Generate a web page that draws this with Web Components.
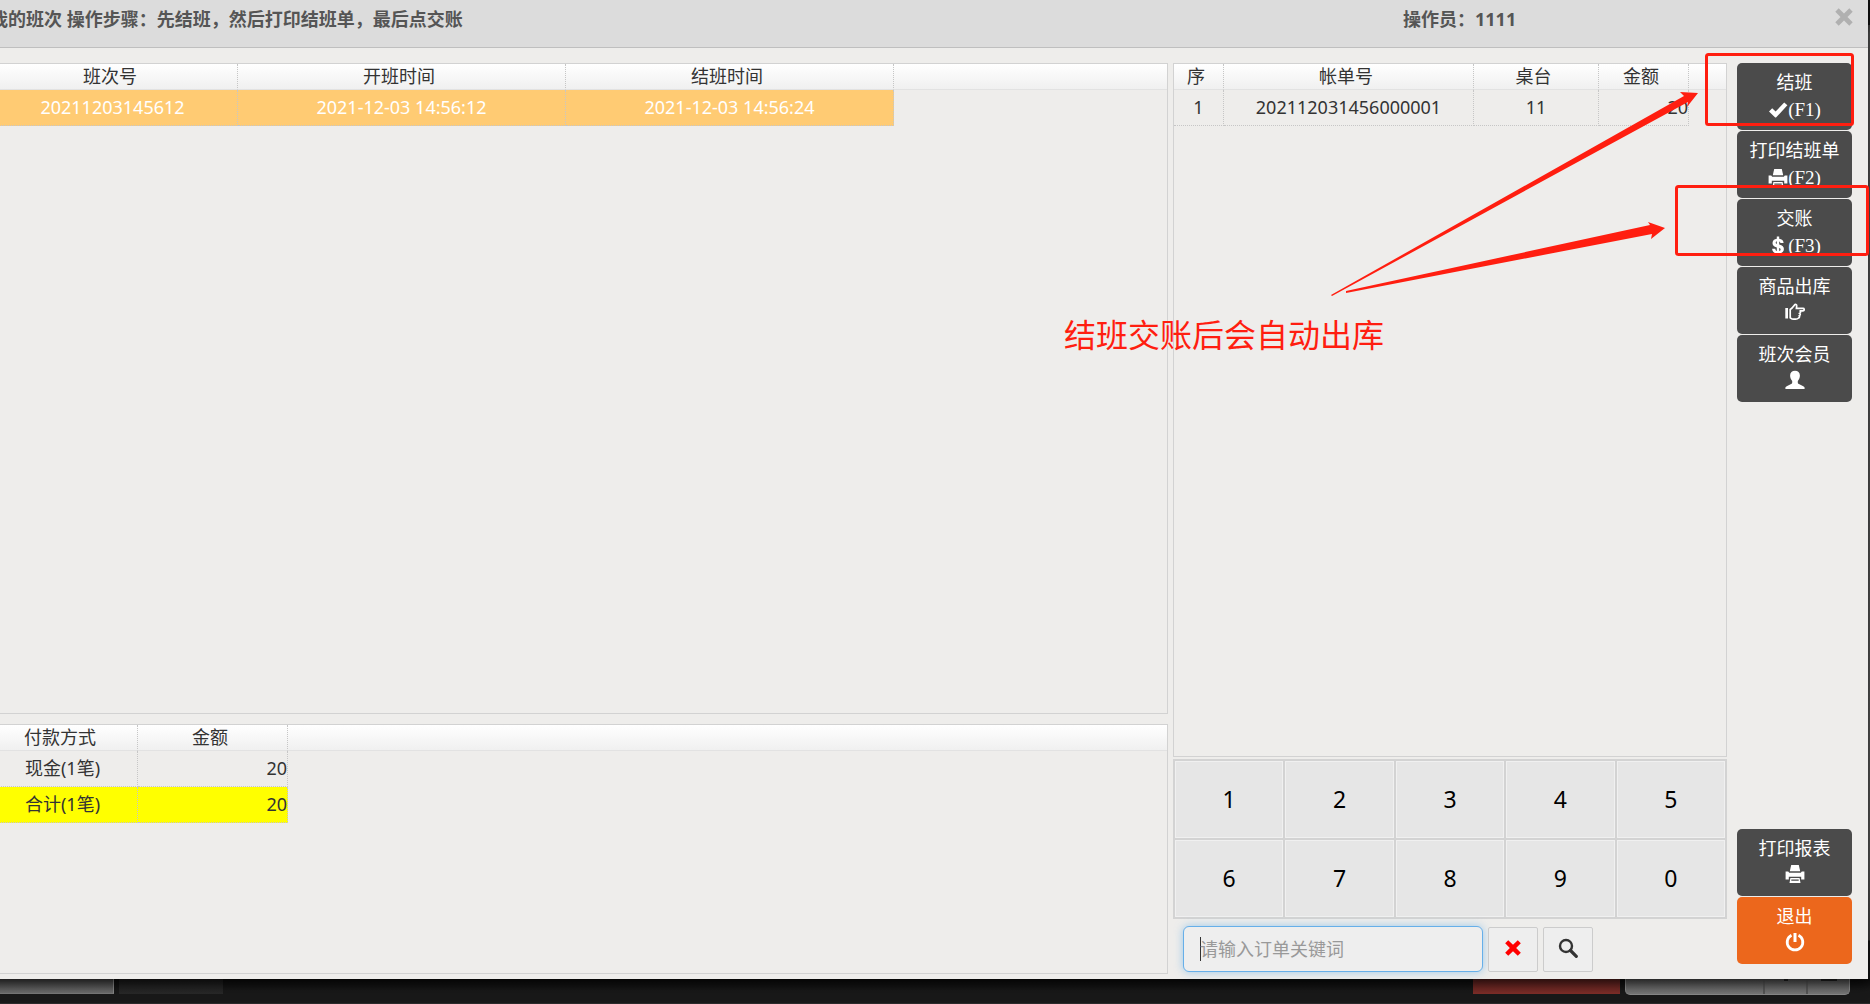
<!DOCTYPE html>
<html lang="zh-CN">
<head>
<meta charset="utf-8">
<title>我的班次</title>
<style>
html,body{margin:0;height:100%}
body{overflow:hidden;background:#191919;font-family:"Noto Sans","Noto Sans CJK SC",sans-serif;font-size:18px;line-height:24px;color:#333}
</style>
</head>
<body>
<shift-page></shift-page>
<script>
const ICONS = {
  check:'<path d="M1 11.5 4.2 8.3 7.6 11.6 16.2 2.4 19.4 5.2 8 17.6 7.2 17.6Z"/>',
  print:'<path d="M6.2 1h7.6l1.4 6.2H4.800z"/><path d="M.6 7.600h2.600l1 1.200h11.600l1-1.200h2.600V15.500h-3.200v-2.800H3.800v2.800H.6z"/><path d="M5.400 14h9.200l.9 5H4.500z M6.300 15.400v1.300h7.400v-1.300z" fill-rule="evenodd"/>',
  usd:'<path d="M8.800 .5h2.400v2.300c2.700.3 4.200 1.700 4.400 4.200h-3.200c-.1-.9-.5-1.400-1.200-1.600v3.100c3.300.8 4.700 2.100 4.700 4.600 0 2.600-1.700 4.100-4.700 4.400V19.500H8.800v-2c-2.900-.3-4.600-1.900-4.700-4.700h3.200c.1 1.200.6 1.900 1.500 2.200v-3.500C5.800 10.700 4.500 9.400 4.500 7.100c0-2.400 1.700-4 4.300-4.300z M8.800 5.300c-.7.2-1.100.7-1.100 1.400s.4 1.100 1.100 1.400z M11.200 12v3.100c.9-.2 1.400-.7 1.400-1.500s-.5-1.300-1.400-1.600z" fill-rule="evenodd"/>',
  hand:'<path d="M.3 6h2.700v10.500H.3z"/><path d="M5.200 7.500C7 6.500 8.300 4.600 9.500 3c.8-1 2.300-.4 2.200.9L11.400 6.400H18c1.600 0 1.600 2.400 0 2.400h-3.400c1.300.6 1.100 2.200.1 2.600.9.700.6 2-.4 2.400.5.8.2 1.800-.7 2.200-.9.900-1.800 1.200-3 1.200H8.500c-1.300 0-2-.5-3.300-1.400z" fill="none" stroke="currentColor" stroke-width="1.700"/>',
  user:'<path d="M10 .8c2.900 0 4.900 1.900 4.900 4.800 0 2-.8 4-2.100 5.300v1.700c0 .8.300 1.100 1.100 1.500l4.400 2.200c1 .5 1.300 1 1.300 2V19H.4v-.7c0-1 .3-1.500 1.300-2l4.400-2.200c.8-.4 1.100-.7 1.100-1.500v-1.700C5.900 9.600 5.100 7.600 5.100 5.600 5.100 2.700 7.100.8 10 .8z"/>',
  off:'<path d="M8.500 1h3v9h-3z"/><path d="M6.500 3.200a7.800 7.800 0 1 0 7 0" fill="none" stroke="currentColor" stroke-width="2.800"/>',
  remove:'<path d="M4.700 1.300 10 6.500l5.300-5.200 3.400 3.400L13.500 10l5.200 5.300-3.400 3.400L10 13.500l-5.300 5.200-3.400-3.400L6.500 10 1.300 4.700z"/>',
  search:'<circle cx="8" cy="8" r="6" fill="none" stroke="currentColor" stroke-width="2.400"/><path d="M12.500 12.500 18.300 18.300" stroke="currentColor" stroke-width="3.200" stroke-linecap="round"/>'
};
class Base extends HTMLElement{
  connectedCallback(){
    if(this.shadowRoot) return;
    this.attachShadow({mode:'open'}).innerHTML='<style>*{box-sizing:border-box}:host{box-sizing:border-box}'+this.css()+'</style>'+this.html();
  }
}
customElements.define('glyph-icon', class extends Base{
  css(){return ':host{display:inline-block;width:20px;height:20px}svg{display:block;width:100%;height:100%;fill:currentColor}'}
  html(){return `<svg viewBox="0 0 20 20" aria-hidden="true">${ICONS[this.getAttribute('name')]}</svg>`}
});
customElements.define('data-grid', class extends Base{
  css(){return `
    :host{display:block;border:1px solid #d2d2d2;overflow:hidden}
    table{width:100%;table-layout:fixed;border-collapse:separate;border-spacing:0}
    th,td{padding:0 0 2px;line-height:22px;text-align:center;font-weight:400;white-space:nowrap;border-right:1px dotted #c6c6c6}
    th{height:26px;padding-right:5px;border-bottom:1px solid #e2e2e2;background:linear-gradient(#fff,#f0f0f0)}
    td{height:36px;border-bottom:1px dotted #c6c6c6}
    th:last-child,td:last-child{border-right:0}
    td:last-child{border-bottom:0}
    td.num{text-align:right}
    tr.selected td:not(:last-child){background:#ffcb73;color:#fff}
    tr.total td:not(:last-child){background:#ff0}`}
  html(){
    const cols=JSON.parse(this.getAttribute('columns')), rows=JSON.parse(this.getAttribute('rows'));
    return `<table><colgroup>${cols.map(c=>`<col style="width:${c[1]}px">`).join('')}<col></colgroup>
    <thead><tr>${cols.map(c=>`<th scope="col">${c[0]}</th>`).join('')}<th></th></tr></thead>
    <tbody>${rows.map(r=>`<tr class="${r.state||''}">${r.cells.map((v,i)=>`<td class="${cols[i][2]||''}">${v}</td>`).join('')}<td></td></tr>`).join('')}</tbody></table>`}
});
customElements.define('key-pad', class extends Base{
  css(){return `
    :host{display:grid;grid-template-columns:repeat(5,1fr);gap:2px;padding:2px;background:#d3d3d3}
    button{height:77px;border:1px solid #f0f0f0;background:#e6e6e6;font:23px/30px "Noto Sans",sans-serif;color:#000;padding:0 0 2px}`}
  html(){return [1,2,3,4,5,6,7,8,9,0].map(n=>`<button type="button">${n}</button>`).join('')}
});
customElements.define('order-search', class extends Base{
  css(){return `
    :host{display:flex;align-items:flex-end;gap:5px;padding-left:10px}
    input{width:300px;height:46px;border:1px solid #66afe9;border-radius:6px;padding:0 16px;font:inherit;color:#333;outline:0;
      background:linear-gradient(#333,#333) 16px 50%/1px 24px no-repeat #eee;box-shadow:0 0 8px rgba(102,175,233,.6)}
    input::placeholder{color:#999;opacity:1}
    button{width:50px;height:45px;border:1px solid #ccc;border-radius:2px;background:#eee;color:#333;padding:0 0 3px;display:flex;align-items:center;justify-content:center}
    .clear{color:#f00}.clear glyph-icon{width:18px;height:18px}`}
  html(){return `<input type="text" aria-label="订单关键词" placeholder="请输入订单关键词">
    <button type="button" class="clear" aria-label="清除"><glyph-icon name="remove"></glyph-icon></button>
    <button type="button" aria-label="搜索"><glyph-icon name="search"></glyph-icon></button>`}
});
customElements.define('action-button', class extends Base{
  css(){return `
    :host{display:block}
    button{width:100%;height:67px;border:0;border-radius:5px;background:var(--fill,#4b4b4b);color:#fff;font:inherit;padding:7px 0 0;display:flex;flex-direction:column;align-items:center;justify-content:flex-start}
    .key{display:flex;align-items:center;height:32px;font:19px/32px "Liberation Serif",serif}
    .key.plain{height:27px}`}
  html(){const k=this.getAttribute('key');
    return `<button type="button"><span><slot></slot></span><span class="key ${k?'':'plain'}"><glyph-icon name="${this.getAttribute('icon')}"></glyph-icon>${k?`<span>(${k})</span>`:''}</span></button>`}
});
customElements.define('backdrop-bar', class extends Base{
  css(){return `
    :host{display:flex;height:25px;align-items:flex-start;background:linear-gradient(#0c0c0c,#191919 12px);border-bottom:1px solid #2b2b2b}
    i{display:block;height:15px}
    .a{width:114px;background:linear-gradient(#444,#6c6c6c);border-right:1px solid #888;border-bottom:1px solid #777;margin-right:5px}
    .b{width:104px;background:linear-gradient(#1b1b1b,#292929)}
    .c{width:147px;background:linear-gradient(#5c211e,#7f2e29);margin:0 5px 0 auto}
    .d{width:225px;height:16px;margin-right:20px;display:flex;justify-content:flex-end;border:1px solid #888;border-top:0;border-radius:0 0 5px 5px;background:linear-gradient(#555,#777)}
    .d b{width:43px;border-left:2px solid #555}
    .d b::after{content:"";display:block;margin:0 auto;width:16px;height:2px;background:#222}
    .d b:first-child::after{width:4px}`}
  html(){return '<i class="a"></i><i class="b"></i><i class="c"></i><i class="d"><b></b><b></b></i>'}
});
customElements.define('shift-annotations', class extends Base{
  css(){return `
    :host{position:absolute;top:0;right:0;width:820px;height:380px;pointer-events:none;color:#ff1e10}
    svg{display:block;fill:#ff1e10}
    rect{fill:none;stroke:#ff1e10;stroke-width:3}
    p{position:absolute;left:14px;top:313px;margin:0;font-size:32px;line-height:44px;white-space:nowrap}`}
  html(){return `<svg width="820" height="380" viewBox="1050 0 820 380">
    <path d="M1331 295 1684 96 1680 92 1698 93 1687 107 1688 102 1332 296Z"/>
    <path d="M1346 291 1650 225 1648 222 1665 228 1651 239 1652 234 1346 293Z"/>
    <rect x="1706.5" y="54.5" width="146" height="70" rx="2"/>
    <rect x="1676.5" y="186.5" width="191" height="68" rx="2"/></svg><p>结班交账后会自动出库</p>`}
});
customElements.define('shift-dialog', class extends Base{
  css(){return `
    :host{display:flex;flex-direction:column;background:#eeedeb;box-shadow:0 4px 12px rgba(0,0,0,.7)}
    header{display:flex;height:48px;padding:7px 14px 0 18px;background:#dcdcdc;border-bottom:1px solid #bfbfbf;color:#555;font-weight:700}
    h1{flex:1;margin:0;font:inherit}
    .op{width:431px}
    .close{border:0;background:none;padding:0;width:20px;height:20px;color:#b0b0b0}
    .close glyph-icon{display:block}
    main{flex:1;min-height:0;display:flex;padding:15px 16px 0 15px}
    .left{flex:1;min-width:0;display:flex;flex-direction:column;gap:10px;padding-bottom:5px;margin-right:5px}
    .left .shifts{flex:1}.left .pay{height:250px}
    .mid{width:554px;display:flex;flex-direction:column;margin-right:10px;padding-bottom:7px}
    .mid .orders{flex:1;margin-bottom:2px}
    order-search{margin-top:7px}
    nav{width:115px;display:flex;flex-direction:column;gap:1px;padding-bottom:15px}
    .push{margin-top:auto}.exit{--fill:#ec671c}`}
  html(){return `
    <header><h1>我的班次 操作步骤：先结班，然后打印结班单，最后点交账</h1><span class="op">操作员：1111</span>
      <button type="button" class="close" aria-label="关闭"><glyph-icon name="remove"></glyph-icon></button></header>
    <main>
      <section class="left">
        <data-grid class="shifts" columns='[["班次号",250],["开班时间",328],["结班时间",328]]' rows='[{"state":"selected","cells":["20211203145612","2021-12-03 14:56:12","2021-12-03 14:56:24"]}]'></data-grid>
        <data-grid class="pay" columns='[["付款方式",150],["金额",150,"num"]]' rows='[{"cells":["现金(1笔)","20"]},{"state":"total","cells":["合计(1笔)","20"]}]'></data-grid>
      </section>
      <section class="mid">
        <data-grid class="orders" columns='[["序",50],["帐单号",250],["桌台",125],["金额",90,"num"]]' rows='[{"cells":["1","202112031456000001","11","20"]}]'></data-grid>
        <key-pad></key-pad>
        <order-search></order-search>
      </section>
      <nav>
        <action-button icon="check" key="F1">结班</action-button>
        <action-button icon="print" key="F2">打印结班单</action-button>
        <action-button icon="usd" key="F3">交账</action-button>
        <action-button icon="hand">商品出库</action-button>
        <action-button icon="user">班次会员</action-button>
        <action-button class="push" icon="print">打印报表</action-button>
        <action-button class="exit" icon="off">退出</action-button>
      </nav>
    </main>`}
});
customElements.define('shift-page', class extends Base{
  css(){return `
    :host{display:flex;flex-direction:column;height:100vh;position:relative;overflow:hidden}
    .stage{flex:1;min-height:0;display:flex;background:linear-gradient(#111 25px,#444 25px,#555 34px,#5c5c5c 860px,#444 940px,#151515 941px)}
    shift-dialog{flex:1;min-width:0;margin:0 2px 0 -28px;position:relative}
    backdrop-bar{flex:none}`}
  html(){return '<div class="stage"><shift-dialog></shift-dialog></div><backdrop-bar></backdrop-bar><shift-annotations></shift-annotations>'}
});
</script>
</body>
</html>
